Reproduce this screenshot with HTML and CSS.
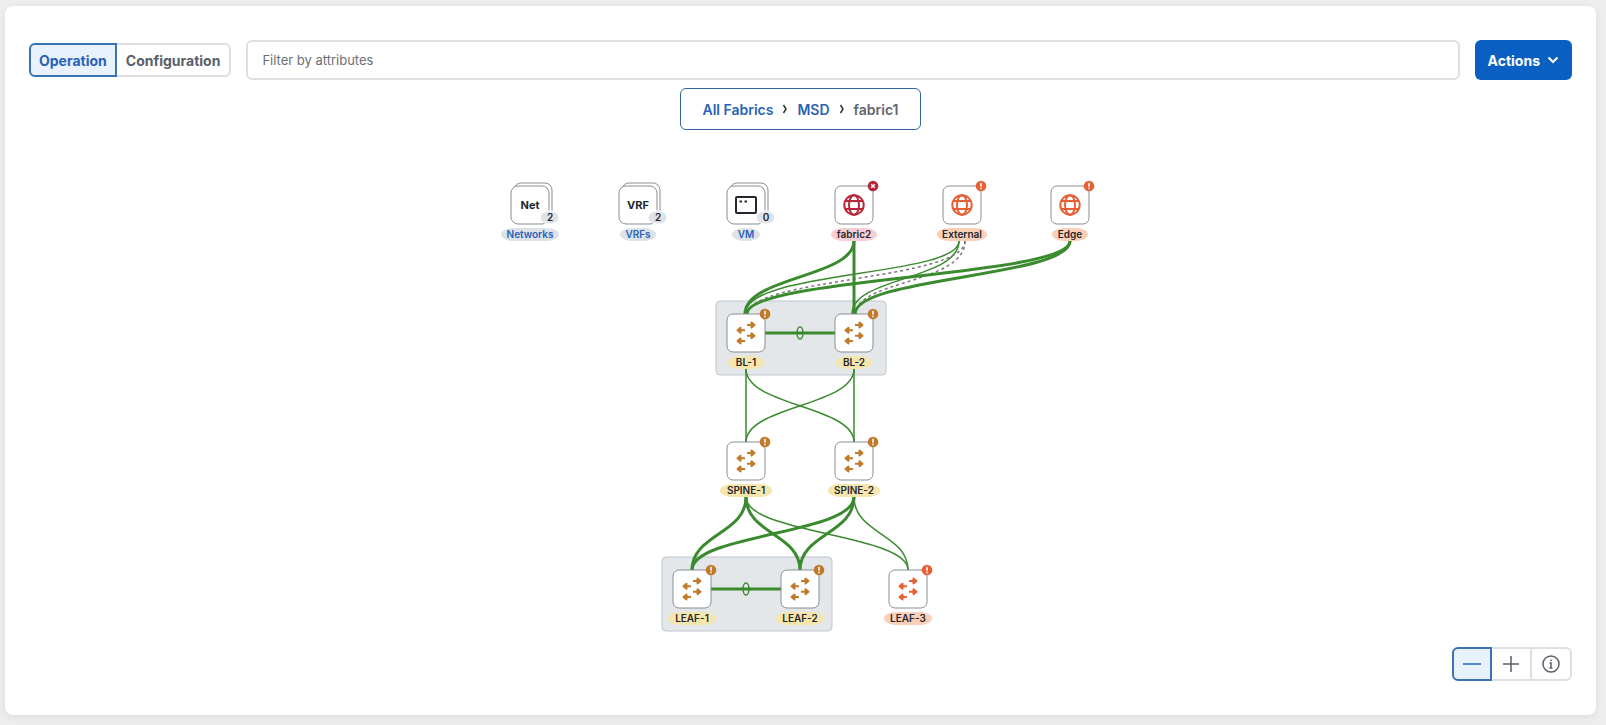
FILE: index.html
```html
<!DOCTYPE html>
<html lang="en">
	<head>
		<meta charset="UTF-8">
		<title>Topology</title>
		<link rel="stylesheet" href="styles.css">
	</head>
	<body>
		<main class="panel">
			<div class="toolbar">
				<div class="segment">
					<button type="button" class="active">Operation</button>
					<button type="button">Configuration</button>
				</div>
				<input type="text" class="filter" placeholder="Filter by attributes" aria-label="Filter by attributes">
				<button type="button" class="actions">Actions
					<svg width="12" height="12" viewBox="0 0 12 12"><path d="M1.500 3.500l4.500 4.500 4.500-4.500"/></svg>
				</button>
			</div>

			<nav class="crumbs">
				<a href="#">All Fabrics</a>
				<svg width="6" height="10" viewBox="0 0 6 10"><path d="M1.500 1L4 5L1.500 9"/></svg>
				<a href="#">MSD</a>
				<svg width="6" height="10" viewBox="0 0 6 10"><path d="M1.500 1L4 5L1.500 9"/></svg>
				<span>fabric1</span>
			</nav>

			<svg class="topology" width="622" height="510" viewBox="0 0 622 510">
				<defs>
					<g id="globe">
						<circle r="9.700"/>
						<ellipse rx="5" ry="9.700"/>
						<path d="M-9-4H9M-9 4H9"/>
					</g>
					<g id="switch">
						<path d="M1-8H8M5.500-10.500L8.500-8L5.500-5.500ZM1 2.700H8M5.500 .200L8.500 2.700L5.500 5.200ZM-1-2.700H-8M-5.500-5.200L-8.500-2.700L-5.500-.200ZM-1 8H-8M-5.500 5.500L-8.500 8L-5.500 10.500Z"/>
					</g>
					<g id="warn">
						<circle r="5.300"/>
						<path d="M0-3.200V.800M0 1.800V3.200"/>
					</g>
					<g id="fail">
						<circle r="5.300"/>
						<path d="M-1.800-1.800L1.800 1.800M1.800-1.800L-1.800 1.800"/>
					</g>
				</defs>

				<!-- vpc pairs -->
				<rect class="pair" x="226" y="171" width="170" height="74" rx="4"/>
				<rect class="pair" x="172" y="427" width="170" height="74" rx="4"/>

				<!-- links -->
				<g class="link">
					<path d="M469 111C469 147 255 140 255 184"/>
					<path d="M469 111C469 150 362 147 362 184"/>
					<path d="M256 239V312M364 239V312"/>
					<path d="M256 239C256 276 364 276 364 312"/>
					<path d="M364 239C364 276 256 276 256 312"/>
					<path d="M256 367C256 404 418 404 418 440"/>
					<path d="M364 367C364 404 418 404 418 440"/>
				</g>
				<g class="link dashed">
					<path d="M475 111C475 150 258 148 258 184"/>
					<path d="M475 111C475 154 366 150 366 184"/>
				</g>
				<g class="link thick">
					<path d="M364 111C364 147 255 147 255 184"/>
					<path d="M364 111V184"/>
					<path d="M580 111C580 147 257 147 257 184"/>
					<path d="M580 111C580 147 365 147 365 184"/>
					<path d="M256 367C256 404 202 404 202 440"/>
					<path d="M256 367C256 404 310 404 310 440"/>
					<path d="M364 367C364 404 202 404 202 440"/>
					<path d="M364 367C364 404 310 404 310 440"/>
					<path d="M275 203H345M221 459H291"/>
				</g>
				<g class="link">
					<ellipse cx="310" cy="203" rx="3" ry="6"/>
					<ellipse cx="256" cy="459" rx="3" ry="6"/>
				</g>

				<!-- groups -->
				<a href="#" class="node group" transform="translate(40 75)">
					<rect class="box" x="-16" y="-22" width="38" height="38" rx="7"/>
					<rect class="box" x="-19" y="-19" width="38" height="38" rx="7"/>
					<text class="short" y="4">Net</text>
					<rect class="count" x="10" y="6" width="19" height="13" rx="9"/>
					<text class="num" x="20" y="16">2</text>
					<rect class="pill" x="-29" y="23" width="58" height="13" rx="12"/>
					<text y="33">Networks</text>
				</a>
				<a href="#" class="node group" transform="translate(148 75)">
					<rect class="box" x="-16" y="-22" width="38" height="38" rx="7"/>
					<rect class="box" x="-19" y="-19" width="38" height="38" rx="7"/>
					<text class="short" y="4">VRF</text>
					<rect class="count" x="10" y="6" width="19" height="13" rx="9"/>
					<text class="num" x="20" y="16">2</text>
					<rect class="pill" x="-18" y="23" width="36" height="13" rx="12"/>
					<text y="33">VRFs</text>
				</a>
				<a href="#" class="node group" transform="translate(256 75)">
					<rect class="box" x="-16" y="-22" width="38" height="38" rx="7"/>
					<rect class="box" x="-19" y="-19" width="38" height="38" rx="7"/>
					<path class="window" d="M-9-8H9Q10-8 10-7V7Q10 8 9 8H-9Q-10 8-10 7V-7Q-10-8-9-8ZM-6.500-3.500H-4M-1.500-3.500H1"/>
					<rect class="count" x="10" y="6" width="19" height="13" rx="9"/>
					<text class="num" x="20" y="16">0</text>
					<rect class="pill" x="-14" y="23" width="28" height="13" rx="12"/>
					<text y="33">VM</text>
				</a>

				<!-- outside fabrics -->
				<g class="node critical" transform="translate(364 75)">
					<rect class="box" x="-19" y="-19" width="38" height="38" rx="6"/>
					<use class="icon" href="#globe"/>
					<use class="status" href="#fail" x="19" y="-19"/>
					<rect class="pill" x="-23" y="23" width="46" height="13" rx="12"/>
					<text y="33">fabric2</text>
				</g>
				<g class="node major" transform="translate(472 75)">
					<rect class="box" x="-19" y="-19" width="38" height="38" rx="6"/>
					<use class="icon" href="#globe"/>
					<use class="status" href="#warn" x="19" y="-19"/>
					<rect class="pill" x="-25" y="23" width="50" height="13" rx="12"/>
					<text y="33">External</text>
				</g>
				<g class="node major" transform="translate(580 75)">
					<rect class="box" x="-19" y="-19" width="38" height="38" rx="6"/>
					<use class="icon" href="#globe"/>
					<use class="status" href="#warn" x="19" y="-19"/>
					<rect class="pill" x="-18" y="23" width="36" height="13" rx="12"/>
					<text y="33">Edge</text>
				</g>

				<!-- border leafs -->
				<g class="node minor" transform="translate(256 203)">
					<rect class="box" x="-19" y="-19" width="38" height="38" rx="6"/>
					<use class="icon switch" href="#switch"/>
					<use class="status" href="#warn" x="19" y="-19"/>
					<rect class="pill" x="-18" y="23" width="36" height="13" rx="12"/>
					<text y="33">BL-1</text>
				</g>
				<g class="node minor" transform="translate(364 203)">
					<rect class="box" x="-19" y="-19" width="38" height="38" rx="6"/>
					<use class="icon switch" href="#switch"/>
					<use class="status" href="#warn" x="19" y="-19"/>
					<rect class="pill" x="-18" y="23" width="36" height="13" rx="12"/>
					<text y="33">BL-2</text>
				</g>

				<!-- spines -->
				<g class="node minor" transform="translate(256 331)">
					<rect class="box" x="-19" y="-19" width="38" height="38" rx="6"/>
					<use class="icon switch" href="#switch"/>
					<use class="status" href="#warn" x="19" y="-19"/>
					<rect class="pill" x="-26" y="23" width="52" height="13" rx="12"/>
					<text y="33">SPINE-1</text>
				</g>
				<g class="node minor" transform="translate(364 331)">
					<rect class="box" x="-19" y="-19" width="38" height="38" rx="6"/>
					<use class="icon switch" href="#switch"/>
					<use class="status" href="#warn" x="19" y="-19"/>
					<rect class="pill" x="-26" y="23" width="52" height="13" rx="12"/>
					<text y="33">SPINE-2</text>
				</g>

				<!-- leafs -->
				<g class="node minor" transform="translate(202 459)">
					<rect class="box" x="-19" y="-19" width="38" height="38" rx="6"/>
					<use class="icon switch" href="#switch"/>
					<use class="status" href="#warn" x="19" y="-19"/>
					<rect class="pill" x="-24" y="23" width="48" height="13" rx="12"/>
					<text y="33">LEAF-1</text>
				</g>
				<g class="node minor" transform="translate(310 459)">
					<rect class="box" x="-19" y="-19" width="38" height="38" rx="6"/>
					<use class="icon switch" href="#switch"/>
					<use class="status" href="#warn" x="19" y="-19"/>
					<rect class="pill" x="-24" y="23" width="48" height="13" rx="12"/>
					<text y="33">LEAF-2</text>
				</g>
				<g class="node major" transform="translate(418 459)">
					<rect class="box" x="-19" y="-19" width="38" height="38" rx="6"/>
					<use class="icon switch" href="#switch"/>
					<use class="status" href="#warn" x="19" y="-19"/>
					<rect class="pill" x="-24" y="23" width="48" height="13" rx="12"/>
					<text y="33">LEAF-3</text>
				</g>
			</svg>

			<div class="segment zoom">
				<button type="button" class="active" aria-label="Zoom out">
					<svg width="20" height="20" viewBox="0 0 20 20"><path d="M1 10H19"/></svg>
				</button>
				<button type="button" aria-label="Zoom in">
					<svg width="20" height="20" viewBox="0 0 20 20"><path d="M2 10H18M10 2V18"/></svg>
				</button>
				<button type="button" aria-label="Information">
					<svg width="20" height="20" viewBox="0 0 20 20"><circle cx="10" cy="10" r="8"/><path d="M8.500 9H10V14M8.500 14H11.500M10 5.500V7"/></svg>
				</button>
			</div>
		</main>
	</body>
</html>
```

FILE: styles.css
```css
* {
	box-sizing: border-box;
}
body {
	margin: 0;
	padding: 6px 10px 10px 5px;
	background-color: #eeeeee;
	font-family: Inter, "Liberation Sans", sans-serif;
	font-size: 14px;
}
.panel {
	display: flex;
	flex-direction: column;
	min-height: calc(100vh - 16px);
	padding: 34px 24px;
	background-color: #fff;
	border-radius: 8px;
	box-shadow: 0 2px 8px rgba(0, 0, 0, 0.08);
}
button {
	font-family: inherit;
	font-size: 14px;
	font-weight: 700;
	cursor: pointer;
}
a {
	color: #2a62b8;
	text-decoration: none;
}
svg {
	fill: none;
}

/* toolbar */
.toolbar {
	display: flex;
	align-items: center;
	gap: 15px;
}
.segment {
	display: flex;
}
.segment button {
	height: 34px;
	padding: 0 9px;
	border: 2px solid #dbe0e3;
	border-left: 0;
	background-color: #fff;
	color: #596069;
}
.segment button:last-child {
	border-radius: 0 6px 6px 0;
}
.segment .active {
	padding: 0 8px;
	border: 2px solid #3a72b4;
	border-radius: 6px 0 0 6px;
	background-color: #e8f2fd;
	color: #2a62b8;
}
.filter {
	flex: 1;
	height: 40px;
	padding: 0 14px;
	border: 2px solid #dbe0e3;
	border-radius: 6px;
	font-family: inherit;
	font-size: 13px;
}
.filter::placeholder {
	color: #6b6f73;
}
.actions {
	display: flex;
	align-items: center;
	gap: 7px;
	height: 40px;
	padding: 0 13px;
	border: 0;
	border-radius: 6px;
	background-color: #0a60c2;
	color: #fff;
}
.actions svg {
	stroke: #fff;
	stroke-width: 2;
}

/* breadcrumb */
.crumbs {
	display: flex;
	align-items: center;
	align-self: center;
	gap: 9px;
	height: 42px;
	margin-top: 8px;
	padding: 0 21px;
	border: 1px solid #3465a4;
	border-radius: 6px;
	font-weight: 600;
	color: #61666b;
}
.crumbs svg {
	stroke: #333;
	stroke-width: 1.5;
}

/* topology */
.topology {
	align-self: center;
}
.pair {
	fill: #e3e7ea;
	stroke: #bfc5cb;
	stroke-width: 1;
}
.link {
	stroke: #3a8a2e;
	stroke-width: 1.5;
}
.thick {
	stroke-width: 3;
}
.dashed {
	stroke: #777;
	stroke-dasharray: 3 3;
}
.node text {
	fill: #23282e;
	font-size: 10px;
	font-weight: 600;
	text-anchor: middle;
}
.node .short {
	font-size: 11px;
	font-weight: 700;
}
.box {
	fill: #fff;
	stroke: #888e95;
}
.count {
	fill: #dfe3e8;
	stroke: #fff;
}
.window {
	stroke: #23282e;
	stroke-width: 2;
}
.icon {
	stroke-width: 2;
}
.switch {
	stroke-linejoin: round;
}
.status path {
	stroke: #fff;
}
#warn path, #fail path {
	stroke: #fff;
	stroke-width: 1.5;
}
.group .pill {
	fill: #dde2e9;
}
.group text {
	fill: #2a62b8;
}
.group .short, .group .num {
	fill: #23282e;
}
.critical .pill {
	fill: #f8cdd3;
}
.critical .icon {
	stroke: #b8283a;
}
.critical .status {
	fill: #b8283a;
}
.major .pill {
	fill: #fad0b9;
}
.major .icon {
	stroke: #e65f35;
}
.major .status {
	fill: #e65f35;
}
.minor .pill {
	fill: #f6e6ae;
}
.minor .icon {
	stroke: #c17a2c;
}
.minor .status {
	fill: #c17a2c;
}

/* zoom buttons */
.zoom {
	align-self: flex-end;
	margin-top: auto;
}
.zoom button {
	display: flex;
	align-items: center;
	justify-content: center;
	width: 40px;
	padding: 0;
}
.zoom svg {
	stroke: currentColor;
	stroke-width: 1.5;
}
```
